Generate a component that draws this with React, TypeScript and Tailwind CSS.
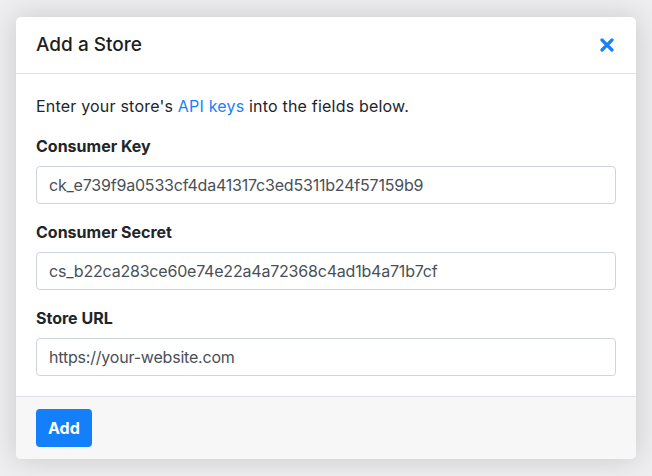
import { useState } from "react";

function CloseIcon() {
    return (
        <svg width="14" height="14" viewBox="0 0 14 14" fill="none">
            <path d="M2 2L12 12M12 2L2 12" stroke="#1a80fb" strokeWidth="3.2" strokeLinecap="round" />
        </svg>
    );
}

interface FieldProps {
    label: string;
    value: string;
    onChange: (v: string) => void;
    placeholder?: string;
    last?: boolean;
}

function Field({ label, value, onChange, placeholder, last }: FieldProps) {
    return (
        <div className={last ? "" : "mb-4"}>
            <label className="block mb-2 text-[16px] leading-6 font-bold text-[#212529]">{label}</label>
            <input
                type="text"
                value={value}
                placeholder={placeholder}
                onChange={(e) => onChange(e.target.value)}
                className="block w-full h-[38px] px-3 text-[16px] tracking-[-0.2px] text-[#495057] placeholder:text-[#495057] bg-white border border-[#ced4da] rounded outline-none"
            />
        </div>
    );
}

export default function App() {
    const [key, setKey] = useState("ck_e739f9a0533cf4da41317c3ed5311b24f57159b9");
    const [secret, setSecret] = useState("cs_b22ca283ce60e74e22a4a72368c4ad1b4a71b7cf");
    const [url, setUrl] = useState("");

    return (
        <div className="min-h-screen bg-[#eeeef0] px-4 pt-[17px] pb-4 font-['Inter',_'Liberation_Sans',_sans-serif]">
            <div className="bg-white rounded-[5px] shadow-[0_0_28px_rgba(0,0,0,0.16)] overflow-hidden">
                {/* Header */}
                <div className="flex items-center justify-between px-5 py-4 border-b border-[#dee2e6]">
                    <h5 className="text-[19px] leading-6 font-medium text-[#1c1e21]">Add a Store</h5>
                    <button className="mr-[2px]">
                        <CloseIcon />
                    </button>
                </div>

                {/* Body */}
                <div className="p-5">
                    <p className="mb-4 text-[16px] leading-6 tracking-[0.2px] text-[#212529]">
                        Enter your store's <a className="text-[#1a80fb]">API keys</a> into the fields below.
                    </p>
                    <Field label="Consumer Key" value={key} onChange={setKey} />
                    <Field label="Consumer Secret" value={secret} onChange={setSecret} />
                    <Field label="Store URL" value={url} onChange={setUrl} placeholder="https://your-website.com" last />
                </div>

                {/* Footer */}
                <div className="px-5 py-3 bg-[#f7f7f7] border-t border-[#dee2e6]">
                    <button className="h-[38px] px-3 rounded bg-[#147ffb] text-white text-[16px] font-bold">
                        Add
                    </button>
                </div>
            </div>
        </div>
    );
}
